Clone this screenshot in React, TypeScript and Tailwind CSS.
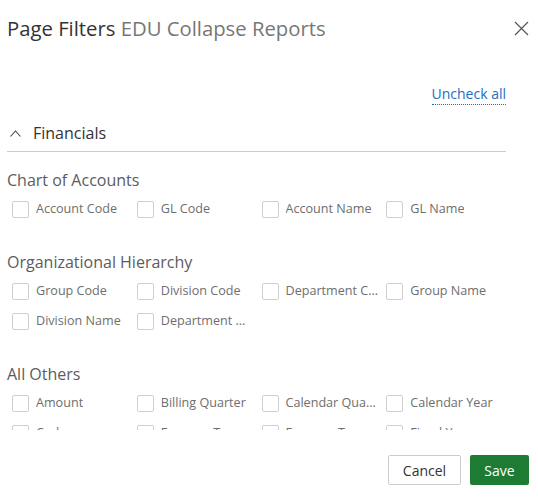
import React from 'react';

type Section = {
  title: string;
  fields: string[];
};

const sections: Section[] = [
  {
    title: 'Chart of Accounts',
    fields: ['Account Code', 'GL Code', 'Account Name', 'GL Name'],
  },
  {
    title: 'Organizational Hierarchy',
    fields: ['Group Code', 'Division Code', 'Department Code', 'Group Name', 'Division Name', 'Department Name'],
  },
  {
    title: 'All Others',
    fields: [
      'Amount',
      'Billing Quarter',
      'Calendar Quarter',
      'Calendar Year',
      'Code',
      'Expense Type',
      'Expense Term',
      'Fiscal Year',
    ],
  },
];

function Field({ label }: { label: string }) {
  return (
    <label className="flex h-[30px] min-w-0 items-center gap-[7px] pl-[5px] pr-[3px]">
      <span className="h-[17px] w-[17px] shrink-0 rounded-[2px] border border-[#cfcfcf] bg-white" />
      <span className="truncate text-[12.6px] text-[#6e6e6e]">{label}</span>
    </label>
  );
}

export default function App() {
  return (
    <div
      className="flex h-[499px] w-[538px] flex-col overflow-hidden bg-white"
      style={{ fontFamily: '"Open Sans", "Noto Sans", sans-serif' }}
    >
      {/* Header */}
      <div className="flex h-[56px] shrink-0 items-center justify-between pl-[7px] pr-[9px]">
        <h2 className="text-[20.3px] leading-7 text-[#333333]">
          Page Filters <span className="text-[#777777]">EDU Collapse Reports</span>
        </h2>
        <button className="flex h-[15px] w-[15px] items-center justify-center">
          <svg width="15" height="15" viewBox="0 0 15 15" fill="none">
            <path d="M1 1 L14 14 M14 1 L1 14" stroke="#555555" strokeWidth="1.2" />
          </svg>
        </button>
      </div>

      {/* Body */}
      <div className="h-[374px] shrink-0 overflow-hidden pl-[7px] pr-[32px] pt-[28px]">
        <div className="flex justify-end">
          <button className="border-b border-dotted border-[#1a6fc4] text-[14px] leading-5 text-[#1a6fc4]">
            Uncheck all
          </button>
        </div>

        <div className="mt-[10px] flex h-[37px] items-center border-b border-[#cccccc]">
          <svg className="ml-[3px]" width="11" height="7" viewBox="0 0 11 7" fill="none">
            <path d="M0.5 6.5 L5.5 1 L10.5 6.5" stroke="#444444" strokeWidth="1.1" />
          </svg>
          <span className="ml-[12px] text-[16px] text-[#333333]">Financials</span>
        </div>

        <div className="pt-[16px]">
          {sections.map(section => (
            <div key={section.title} className="mb-[26px]">
              <h3 className="text-[16px] leading-6 text-[#5c5c5c]">{section.title}</h3>
              <div className="mt-[2px] grid grid-cols-4">
                {section.fields.map(field => (
                  <Field key={field} label={field} />
                ))}
              </div>
            </div>
          ))}
        </div>
      </div>

      {/* Footer */}
      <div className="flex flex-1 items-start justify-end gap-[9px] pr-[9px] pt-[25px]">
        <button className="h-[30px] w-[73px] rounded-[2px] border border-[#cccccc] bg-white text-[14px] text-[#333333]">
          Cancel
        </button>
        <button className="h-[30px] w-[59px] rounded-[2px] bg-[#1e7b34] text-[14px] text-white">
          Save
        </button>
      </div>
    </div>
  );
}
